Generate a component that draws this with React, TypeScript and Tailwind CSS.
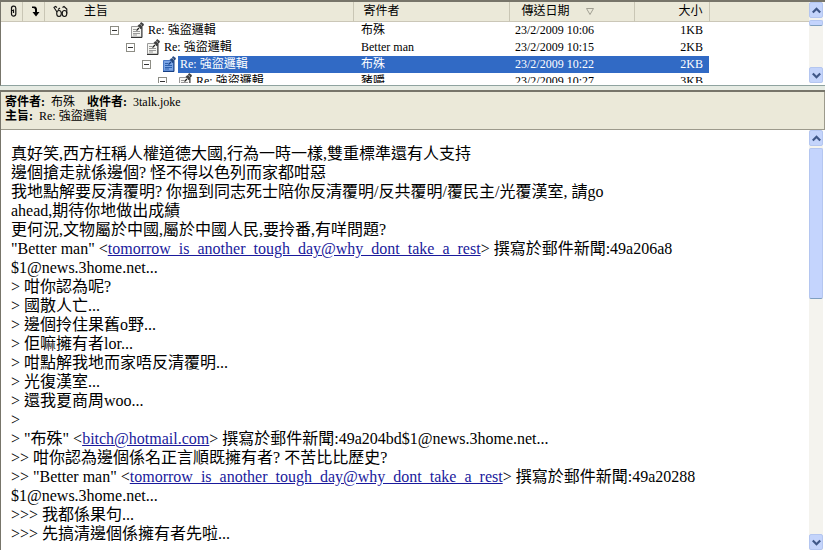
import React from "react";

type Message = {
  depth: string;
  subject: string;
  sender: string;
  date: string;
  size: string;
  selected?: boolean;
};

const messages: Message[] = [
  { depth: "pl-8", subject: "Re: 強盜邏輯", sender: "布殊", date: "23/2/2009 10:06", size: "1KB" },
  { depth: "pl-12", subject: "Re: 強盜邏輯", sender: "Better man", date: "23/2/2009 10:15", size: "2KB" },
  { depth: "pl-16", subject: "Re: 強盜邏輯", sender: "布殊", date: "23/2/2009 10:22", size: "2KB", selected: true },
  { depth: "pl-20", subject: "Re: 強盜邏輯", sender: "豬嚼", date: "23/2/2009 10:27", size: "3KB" },
];

function Paperclip() {
  return (
    <svg width="7" height="12" viewBox="0 0 7 12" fill="none" stroke="#111" strokeWidth="1.2">
      <path d="M3.500 4.500v3.500M5.800 3v6a2.100 2.100 0 0 1-4.300 0V5.500M1.500 7V3.500a2.100 2.100 0 0 1 4.300-.500M1.500 5.500h2" />
    </svg>
  );
}

function DownArrow() {
  return (
    <svg width="9" height="11" viewBox="0 0 9 11">
      <path d="M1 .5h2.500C5.300 .5 6 2 6 3.500V6h2.500L5 10.500 1.500 6H4V3.500C4 2.300 2.500 2 1 2z" fill="#000" />
    </svg>
  );
}

function Glasses() {
  return (
    <svg width="16" height="13" viewBox="0 0 16 13" fill="none" stroke="#111" strokeWidth="1.100">
      <ellipse cx="6" cy="8.500" rx="2.300" ry="3" />
      <ellipse cx="11.500" cy="8.500" rx="2.300" ry="3" />
      <path d="M4 7 1 2.500 2.500 1.500l1.500 1M8.300 8h1M13.800 8.500V4L11 1.500 9.500 2.500M5 4.500 7 3" />
    </svg>
  );
}

function NoteIcon({ selected }: { selected?: boolean }) {
  return (
    <svg width="13" height="16" viewBox="0 0 13 16" className="shrink-0">
      <path d="M.5 4.500h10v10.500H.5z" fill={selected ? "#7ba4e4" : "#f6f6f2"} stroke={selected ? "#4a78c4" : "#999"} />
      <path d="M11 5v10.500H0" fill="none" stroke={selected ? "#173f83" : "#333"} />
      <path d="M2 7.500h3M2 9.500h7M2 11.500h7M2 13h4" stroke={selected ? "#2b5fae" : "#999"} />
      <path d="M5.500 8.500 8 6" stroke={selected ? "#173f83" : "#222"} strokeWidth="1.200" />
      <path d="m7 3.500 2-1L10 .5l2.500 1.500-.5 2-1.500.500-.5 2.500z" fill={selected ? "#26487f" : "#444"} stroke={selected ? "#173f83" : "#222"} strokeWidth=".6" />
      <path d="m9.500 2.500 1.500 1" stroke="#bbb" />
    </svg>
  );
}

function CollapseBox() {
  return (
    <svg width="9" height="9" viewBox="0 0 9 9" className="block">
      <rect x=".5" y=".5" width="8" height="8" fill="#fff" stroke="#8d8d85" />
      <path d="M2 4.500h5" stroke="#333" />
    </svg>
  );
}

function ScrollButton({ direction }: { direction: "up" | "down" }) {
  return (
    <button
      type="button"
      aria-label={direction === "up" ? "向上捲動" : "向下捲動"}
      className="flex h-4 w-full shrink-0 items-center justify-center rounded-xs border border-[#b4c6f0] bg-[#c4d4fb]"
    >
      <svg width="9" height="7" viewBox="0 0 9 7" fill="none" stroke="#3f5788" strokeWidth="2.200">
        <path d={direction === "up" ? "M.8 5.500 4.500 1.800l3.700 3.700" : "m.8 1.500 3.700 3.700 3.700-3.700"} />
      </svg>
    </button>
  );
}

function ScrollBar({ thumb }: { thumb: string }) {
  return (
    <div className="flex w-3.5 shrink-0 flex-col bg-[#f4f3ee]">
      <ScrollButton direction="up" />
      <div className="flex-1 pt-0.5">
        <div className={`${thumb} rounded-xs border border-[#b4c6f0] border-b-[#7f9fc0] bg-[#c4d4fd]`} />
      </div>
      <ScrollButton direction="down" />
    </div>
  );
}

const headCell = "border-r border-[#c9c6b5] p-0 font-normal";

function MessageList() {
  return (
    <section className="flex h-[86px] shrink-0 border-t-2 border-b border-l border-t-[#77756a] border-b-[#8fa3a0] border-l-[#77756a] bg-white pb-0.5">
      <div className="min-w-0 flex-1 overflow-hidden">
        <table className="w-full table-fixed border-collapse text-xs leading-4 whitespace-nowrap">
          <colgroup>
            <col className="w-[21px]" />
            <col className="w-[22px]" />
            <col className="w-[34px]" />
            <col className="w-[275px]" />
            <col className="w-[156px]" />
            <col className="w-[125px]" />
            <col className="w-[75px]" />
            <col />
          </colgroup>
          <thead>
            <tr className="h-[19px] border-b border-[#cbc7b8] bg-[#ebe9d9] text-left">
              <th className={headCell} aria-label="附件"><span className="flex justify-center pl-1"><Paperclip /></span></th>
              <th className={headCell} aria-label="下載"><span className="flex justify-center pl-1"><DownArrow /></span></th>
              <th className="p-0" aria-label="監看"><span className="flex justify-center"><Glasses /></span></th>
              <th className={`${headCell} pl-1.5`}>主旨</th>
              <th className={`${headCell} pl-2.5`}>寄件者</th>
              <th className={`${headCell} pl-3`}>
                <span className="flex items-center gap-4">
                  傳送日期
                  <svg width="8" height="7" viewBox="0 0 8 7" fill="none" stroke="#a19f92">
                    <path d="M.5.5h7L4 6.500z" />
                  </svg>
                </span>
              </th>
              <th className={`${headCell} pr-1.5 text-right`}>大小</th>
              <th className="p-0" aria-label="空白" />
            </tr>
          </thead>
          <tbody>
            {messages.map((m) => {
              const mark = m.selected ? "bg-[#316ac5] text-white" : "";
              return (
                <tr key={m.date} className="h-[17px]">
                  <td className="p-0" />
                  <td className="p-0" />
                  <td className="p-0" />
                  <td className="p-0">
                    <div className={`flex h-[17px] items-center ${m.depth}`}>
                      <button type="button" aria-label="收合" className="mr-3"><CollapseBox /></button>
                      <NoteIcon selected={m.selected} />
                      <span className={`ml-0.5 flex-1 self-stretch pl-0.5 ${mark}`}>{m.subject}</span>
                    </div>
                  </td>
                  <td className={`p-0 pl-2 ${mark}`}>{m.sender}</td>
                  <td className={`p-0 pl-1.5 ${mark}`}>{m.date}</td>
                  <td className={`p-0 pr-1.5 text-right ${mark}`}>{m.size}</td>
                  <td className="p-0" />
                </tr>
              );
            })}
          </tbody>
        </table>
      </div>
      <ScrollBar thumb="h-1.5" />
      <div className="w-0.5" />
    </section>
  );
}

function Mail({ address }: { address: string }) {
  return (
    <a href={`mailto:${address}`} className="text-[#1a1a9c] underline">
      {address}
    </a>
  );
}

const rest = "tomorrow_is_another_tough_day@why_dont_take_a_rest";

const lines: React.ReactNode[] = [
  "真好笑,西方枉稱人權道德大國,行為一時一樣,雙重標準還有人支持",
  "邊個搶走就係邊個? 怪不得以色列而家都咁惡",
  "我地點解要反清覆明? 你搵到同志死士陪你反清覆明/反共覆明/覆民主/光覆漢室, 請go",
  "ahead,期待你地做出成績",
  "更何況,文物屬於中國,屬於中國人民,要拎番,有咩問題?",
  <>"Better man" &lt;<Mail address={rest} />&gt; 撰寫於郵件新聞:49a206a8</>,
  "$1@news.3home.net...",
  "> 咁你認為呢?",
  "> 國散人亡...",
  "> 邊個拎住果舊o野...",
  "> 佢嘛擁有者lor...",
  "> 咁點解我地而家唔反清覆明...",
  "> 光復漢室...",
  "> 還我夏商周woo...",
  ">",
  <>&gt; "布殊" &lt;<Mail address="bitch@hotmail.com" />&gt; 撰寫於郵件新聞:49a204bd$1@news.3home.net...</>,
  ">> 咁你認為邊個係名正言順既擁有者? 不苦比比歷史?",
  <>&gt;&gt; "Better man" &lt;<Mail address={rest} />&gt; 撰寫於郵件新聞:49a20288</>,
  "$1@news.3home.net...",
  ">>> 我都係果句...",
  ">>> 先搞清邊個係擁有者先啦...",
];

function Preview() {
  return (
    <section className="flex min-h-0 flex-1 flex-col border-t-2 border-l border-[#77756a] bg-white">
      <header className="border-r border-b border-[#9c9a8c] bg-[#ebe9d9] px-1 pt-[3px] pb-1.5 text-xs leading-[14px]">
        <p className="flex gap-3">
          <span><b>寄件者:</b>&nbsp; 布殊</span>
          <span><b>收件者:</b>&nbsp; 3talk.joke</span>
        </p>
        <p><b>主旨:</b>&nbsp; Re: 強盜邏輯</p>
      </header>
      <div className="flex min-h-0 flex-1">
        <article className="min-w-0 flex-1 overflow-hidden px-2.5 pt-3.5 text-base leading-[19px] whitespace-nowrap">
          {lines.map((line, i) => (
            <p key={i}>{line}</p>
          ))}
        </article>
        <ScrollBar thumb="h-[151px]" />
        <div className="w-0.5" />
      </div>
    </section>
  );
}

export default function App() {
  return (
    <main className="flex h-screen flex-col gap-1 overflow-hidden bg-[#e6ebe3] font-['Liberation_Serif','Noto_Sans_CJK_TC',serif] text-black">
      <MessageList />
      <Preview />
    </main>
  );
}
